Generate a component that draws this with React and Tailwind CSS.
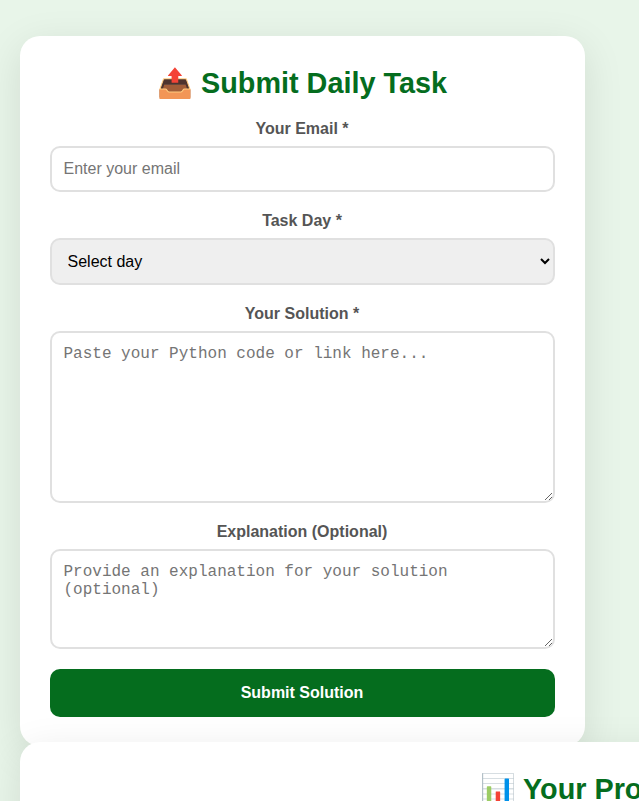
import React from "react";

const label = "block text-center text-base leading-[18px] font-bold text-[#555] mb-2";
const field = "block w-full rounded-[10px] border-2 border-[#e0e0e0] p-3 text-base text-black placeholder:text-[#757575] outline-none";

export default function App() {
  return (
    <div className="h-[801px] w-[639px] overflow-hidden bg-[#e8f5e9] pt-9 pl-[19.5px] font-['Liberation_Sans',Arial,sans-serif]">
      <section className="h-[710px] w-[565px] rounded-[20px] bg-white px-[30px] pt-[31px] shadow-[0_10px_40px_rgba(0,0,0,0.1)]">
        <h2 className="mb-[20px] text-center text-[28.8px] leading-[33px] font-bold text-[#056d1e]">📤 Submit Daily Task</h2>
        <label className={label}>Your Email *</label>
        <input className={`${field} h-[46px] mb-5`} placeholder="Enter your email" />
        <label className={label}>Task Day *</label>
        <select className="mb-5 block h-[47px] w-full rounded-[10px] border-2 border-[#e0e0e0] bg-[#efefef] p-3 text-base text-black [appearance:auto]">
          <option>Select day</option>
        </select>
        <label className={label}>Your Solution *</label>
        <textarea className={`${field} mb-5 h-[172px] font-['Liberation_Mono',monospace] leading-[18px]`} placeholder="Paste your Python code or link here..." />
        <label className={label}>Explanation (Optional)</label>
        <textarea className={`${field} mb-5 h-[100px] font-['Liberation_Mono',monospace] leading-[18px]`} placeholder="Provide an explanation for your solution (optional)" />
        <button className="block h-12 w-full rounded-[10px] bg-[#056d1e] text-base font-bold text-white">Submit Solution</button>
      </section>
      <section className="-mt-1 h-[200px] w-[1200px] rounded-[20px] bg-white pt-[31px] pl-[460px] shadow-[0_10px_40px_rgba(0,0,0,0.1)]">
        <h2 className="text-[28.8px] leading-[33px] font-bold text-[#056d1e]">📊 Your Progress</h2>
      </section>
    </div>
  );
}
